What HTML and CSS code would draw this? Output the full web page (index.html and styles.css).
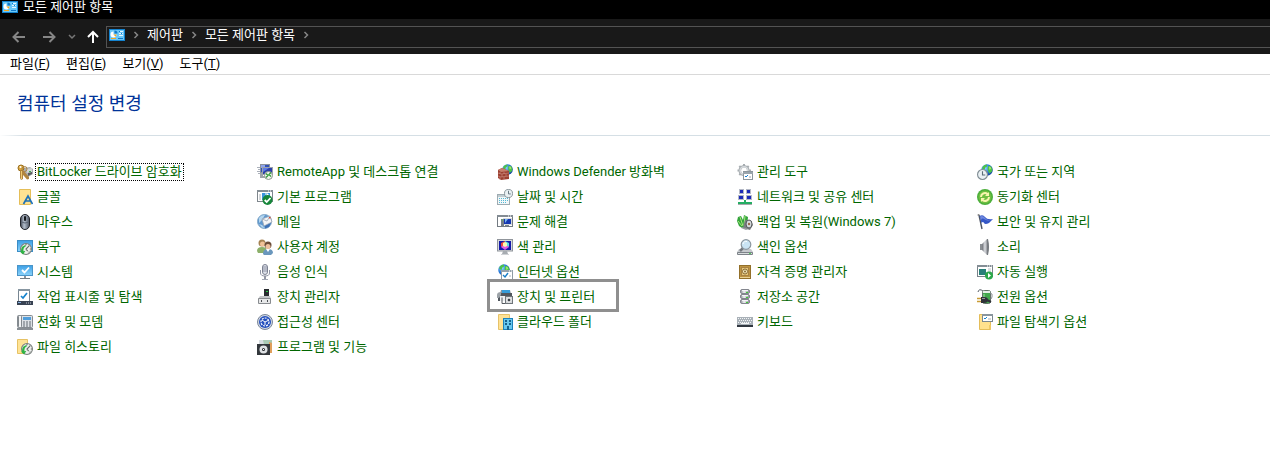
FILE: index.html
```html
<!DOCTYPE html>
<html lang="ko">
<head>
<meta charset="utf-8">
<meta name="viewport" content="width=device-width, initial-scale=1">
<title>모든 제어판 항목</title>
<link rel="stylesheet" href="styles.css">
</head>
<body>
<svg class="defs" aria-hidden="true">
<defs>
<linearGradient id="gBlue" x1="0" y1="0" x2="0" y2="1"><stop offset="0" stop-color="#3b9fe6"/><stop offset="1" stop-color="#8ed4fa"/></linearGradient>
<radialGradient id="gGlobe" cx=".35" cy=".35" r=".7"><stop offset="0" stop-color="#8ad4ff"/><stop offset=".6" stop-color="#2376d8"/><stop offset="1" stop-color="#123f9a"/></radialGradient>
<linearGradient id="gGray" x1="0" y1="0" x2="1" y2="0"><stop offset="0" stop-color="#6d7077"/><stop offset=".45" stop-color="#dcdee2"/><stop offset="1" stop-color="#62656c"/></linearGradient>
<linearGradient id="gDisk" x1="0" y1="0" x2="1" y2="0"><stop offset="0" stop-color="#8a8d95"/><stop offset=".4" stop-color="#f0f1f4"/><stop offset="1" stop-color="#8d9098"/></linearGradient>
<linearGradient id="gMouse" x1="0" y1="0" x2="1" y2="0"><stop offset="0" stop-color="#3a404b"/><stop offset=".4" stop-color="#b6c1cf"/><stop offset="1" stop-color="#4a525f"/></linearGradient>
<symbol id="panel" viewBox="0 0 16 12"><rect width="16" height="12" fill="#1382cf"/><rect x="1" y="1" width="14" height="10" fill="#69c7f7"/><path d="M4.500 2.500v3h3a3 3 0 1 1-3-3z" fill="#fff"/><path d="M5.500 1.500a3 3 0 0 1 3 3h-3z" fill="#1178c8"/><path d="M4.500 5.500h3a3 3 0 0 1-1 2.200z" fill="#f4a51c"/><path d="M10 2h4v1h-4zM10 4h4v1h-4zM10 6h4v1h-4z" fill="#e6f6fe"/><path d="M10 2h1v1h-1zM12 4h1v1h-1z" fill="#1178c8"/><path d="M2 9h5v1H2z" fill="#f4a51c"/><path d="M9 9h5v1H9z" fill="#1178c8"/></symbol>
<symbol id="next" viewBox="0 0 8 8"><path d="M2.500 1l3 3-3 3" fill="none" stroke="#858585" stroke-width="1.500"/></symbol>
<symbol id="globe" viewBox="0 0 10 10"><circle cx="5" cy="5" r="4.800" fill="url(#gGlobe)"/><path d="M1.500 2Q3 .5 5 .5L5 2 3.500 3 3 5 1 4zM6 1.500l2.500.5 1 2.500-.5 2-2 1.500L6 6l-.5-2zM3 6l2 1-.5 2.500L3 9z" fill="#4cc348"/><path d="M6.500 2l1.500.5.5 1.500-1.500 1z" fill="#a2e86b"/></symbol>
<symbol id="clock" viewBox="0 0 10 10"><circle cx="5" cy="5" r="4.500" fill="#e9f0f3" stroke="#7f8c93"/><path d="M5 2v3.500h2.500" fill="none" stroke="#5b6d77"/></symbol>
<symbol id="rewind" viewBox="0 0 11 11"><circle cx="5.500" cy="5.500" r="5" fill="#eef0ee" stroke="#777d7b"/><path d="M8.500 2.500L5.500 5.500 7 7.500M5.500 1v1M10 5.500H9M8.500 8.500L8 8" stroke="#626967" fill="none"/><path d="M1 7.500C.8 4 2.500 2 5.500 2L5 3.500C3.500 4 3 5.500 3.200 7.500L5 7 2.800 10.500 0 8z" fill="#2fb344"/></symbol>
</defs>
</svg>

<header class="titlebar">
<svg class="panel-icon" aria-hidden="true"><use href="#panel"/></svg>
<span>모든 제어판 항목</span>
</header>

<nav class="navbar" aria-label="탐색">
<div class="nav-buttons">
<button type="button" class="nav-btn" aria-label="뒤로"><svg width="14" height="12" viewBox="0 0 14 12"><path d="M13 6H1.500M6.500 1l-5 5 5 5" fill="none" stroke="#868686" stroke-width="2"/></svg></button>
<button type="button" class="nav-btn" aria-label="앞으로"><svg width="14" height="12" viewBox="0 0 14 12"><path d="M1 6h11.500M7.500 1l5 5-5 5" fill="none" stroke="#868686" stroke-width="2"/></svg></button>
<button type="button" class="nav-btn nav-btn-small" aria-label="최근 위치"><svg width="8" height="6" viewBox="0 0 8 6"><path d="M1 1l3 3 3-3" fill="none" stroke="#777" stroke-width="1.500"/></svg></button>
<button type="button" class="nav-btn nav-btn-up" aria-label="위로"><svg width="14" height="14" viewBox="0 0 14 14"><path d="M7 13V2M2 7l5-5 5 5" fill="none" stroke="#fff" stroke-width="2"/></svg></button>
</div>
<div class="address">
<svg class="panel-icon" aria-hidden="true"><use href="#panel"/></svg>
<svg class="sep" aria-hidden="true"><use href="#next"/></svg>
<a href="#">제어판</a>
<svg class="sep" aria-hidden="true"><use href="#next"/></svg>
<a href="#">모든 제어판 항목</a>
<svg class="sep" aria-hidden="true"><use href="#next"/></svg>
</div>
</nav>

<div class="menubar">
<button type="button">파일(<u>F</u>)</button>
<button type="button">편집(<u>E</u>)</button>
<button type="button">보기(<u>V</u>)</button>
<button type="button">도구(<u>T</u>)</button>
</div>

<main>
<h1 class="heading">컴퓨터 설정 변경</h1>
<ul class="items">
<li><svg class="icon" viewBox="0 0 16 16"><path d="M7 4l6-1 3 2v5l-5 3-5-2z" fill="#a9adb0"/><path d="M9 5l6-1v4l-5 1z" fill="#d3d6d7"/><path d="M11 9l4-1v2l-4 2z" fill="#5a5d60"/><path d="M12 7h2v1h-2z" fill="#36b34c"/><circle cx="4" cy="4" r="3" fill="#d8a53c" stroke="#9b701f"/><circle cx="3.500" cy="3" r="1" fill="#fff"/><path d="M3 7h3v8l-2 1-1-2zM6 6l6 7v2l-2 .5-6-7z" fill="#b08540"/><path d="M4 7h1v8H4z" fill="#f1cc70"/><circle cx="7.500" cy="5" r="2.500" fill="none" stroke="#a98040"/></svg><a class="focused" href="#">BitLocker 드라이브 암호화</a></li>
<li><svg class="icon" viewBox="0 0 16 16"><path d="M0 3.500h3M1 5.500h2M0 7.500h3M1 9.500h2" stroke="#aab0ba"/><rect x="3.500" y=".5" width="9" height="8" fill="#3150b5" stroke="#8a929c"/><path d="M4 1h4v3H4z" fill="#8ea4ea"/><rect x="5.500" y="3.500" width="10" height="7" fill="#2a3fa8" stroke="#9aa2ab"/><path d="M6 4h6l-6 4z" fill="#5f7ce6"/><path d="M3 9h3v3h4v2H3z" fill="#9ba2a8"/><circle cx="11.500" cy="11.500" r="4" fill="#f1f5ef" stroke="#8c958c"/><path d="M9 9.500l2 2-2 2M14 8.500l-2 2 2 2" fill="none" stroke="#329b39" stroke-width="1.300"/></svg><a href="#">RemoteApp 및 데스크톱 연결</a></li>
<li><svg class="icon" viewBox="0 0 16 16"><svg x="5" y="0" width="11" height="11"><use href="#globe"/></svg><path d="M1 6l4-2 7 3v8l-8 1-3-2z" fill="#9c3f30"/><path d="M1 6l4-2 7 3-8 1z" fill="#c57e6b"/><path d="M1 9l3 1 8-1M1 12l3 1 8-1M3 8v2M7 8v2M5 10v3M9 10v2M3 13v3M7 13v2" fill="none" stroke="#d0968a" stroke-width=".6"/></svg><a href="#">Windows Defender 방화벽</a></li>
<li><svg class="icon" viewBox="0 0 16 16"><circle cx="7" cy="6.500" r="4.200" fill="none" stroke="#a7adb1" stroke-width="2.600"/><path d="M7 0v3M7 10v3M.5 6.500h3M11 6.500h3M2.300 2l2 2M11.700 2l-2 2M2.300 11l2-2" stroke="#a7adb1" stroke-width="2"/><circle cx="7" cy="6.500" r="3.800" fill="none" stroke="#d6dadd" stroke-width="1.600"/><rect x="6.500" y="7.500" width="9" height="8" fill="#fff" stroke="#8d979e"/><path d="M6 8h10v2H6z" fill="#9aa5ad"/><path d="M8 12l1 1 2-2" fill="none" stroke="#167fd2"/><path d="M12 13h2" stroke="#9aa5ad"/></svg><a href="#">관리 도구</a></li>
<li><svg class="icon" viewBox="0 0 16 16"><svg x="4" y="0" width="12" height="12"><use href="#globe"/></svg><svg x="0" y="5" width="11" height="11"><use href="#clock"/></svg></svg><a href="#">국가 또는 지역</a></li>

<li><svg class="icon" viewBox="0 0 16 16"><path d="M2.500.5h11v15h-11z" fill="#ffe292" stroke="#e5be58"/><path d="M6.500 15L11 7l4.500 8M8.500 12h5" fill="none" stroke="#1e72b8" stroke-width="1.700"/></svg><a href="#">글꼴</a></li>
<li><svg class="icon" viewBox="0 0 16 16"><rect x=".5" y="1.500" width="15" height="11" fill="#fff" stroke="#7f878d"/><path d="M0 1h16v2H0z" fill="#858e95"/><path d="M11 2h1M13 2h1" stroke="#fff"/><rect x="2" y="5" width="2" height="6" fill="#d4d7da"/><rect x="5" y="4" width="8" height="7" fill="#3b96dc"/><path d="M7 9l4-4M8 5h3v3" fill="none" stroke="#fff"/><circle cx="10.500" cy="11" r="5" fill="#16863a"/><path d="M7.700 11l2 2 3.800-4" fill="none" stroke="#fff" stroke-width="1.800"/></svg><a href="#">기본 프로그램</a></li>
<li><svg class="icon" viewBox="0 0 16 16"><rect x=".5" y="5.500" width="12" height="10" fill="#f2f7f9" stroke="#9eabb1"/><path d="M1 6h11v2H1z" fill="#c1cdd2"/><path d="M2 9.500h9M2 11.500h9M2 13.500h7" stroke="#56bad5" stroke-dasharray="1 1"/><svg x="7" y="0" width="9" height="9"><use href="#clock"/></svg></svg><a href="#">날짜 및 시간</a></li>
<li><svg class="icon" viewBox="0 0 16 16"><path d="M2 0h5v5H2zM9 0h5v5H9zM1 6h6v5H1zM9 6h6v5H9z" fill="#b4b9c6"/><path d="M3 1h3v3H3zM10 1h3v3h-3zM2 7h4v3H2zM10 7h4v3h-4z" fill="#1b2ab8"/><path d="M7 11h2v2h6v2H1v-2h6z" fill="#25ad63"/><path d="M1 15h14v1H1z" fill="#a6aaad"/></svg><a href="#">네트워크 및 공유 센터</a></li>
<li><svg class="icon" viewBox="0 0 16 16"><circle cx="8" cy="8" r="8" fill="#4caf3b"/><circle cx="8" cy="8" r="6.500" fill="#70bf42"/><path d="M3 8a5 5 0 0 1 8-4l1-1v4H8l1.500-1.500A3 3 0 0 0 5 8z" fill="#f8f6b0"/><path d="M13 8a5 5 0 0 1-8 4l-1 1V9h4l-1.500 1.500A3 3 0 0 0 11 8z" fill="#f8f6b0"/></svg><a href="#">동기화 센터</a></li>

<li><svg class="icon" viewBox="0 0 16 16"><rect x="3.500" y=".5" width="9" height="15" rx="4.500" fill="url(#gMouse)" stroke="#23262c"/><path d="M4 8q4 2 8 0" fill="none" stroke="#5b6574"/><rect x="7" y="2" width="2" height="5" rx="1" fill="#15181c"/></svg><a href="#">마우스</a></li>
<li><svg class="icon" viewBox="0 0 16 16"><circle cx="7.500" cy="7.500" r="7" fill="#5f97cf" stroke="#86abc9"/><path d="M2 4Q4 1 8 1L5 6l-3 3zM2 10l3 1 3 3-3-.5z" fill="#b4d6ef"/><path d="M5 5l8-3 2 6-8 4z" fill="#f4f5f7" stroke="#98a3b3" stroke-width=".8"/><path d="M5 5l5 2 3-5" fill="none" stroke="#9aa7b5" stroke-width=".8"/><path d="M12 3h1.500v1.500H12z" fill="#d34e35"/><path d="M8 12l6-3-2 4-4 1.500z" fill="#3e71b5"/></svg><a href="#">메일</a></li>
<li><svg class="icon" viewBox="0 0 16 16"><rect x=".5" y="1.500" width="15" height="11" fill="#fff" stroke="#737b82"/><path d="M0 1h16v2H0z" fill="#848c93"/><path d="M11 2h1M13 2h1" stroke="#fff"/><rect x="6" y="4" width="9" height="7" fill="#d6d9dd"/><rect x="7" y="5" width="7" height="5" fill="#1638b2"/><path d="M8 5h3L8 9z" fill="#7eb9ee"/><rect x="4" y="5" width="3" height="7" fill="#777f87"/><path d="M5 6h1" stroke="#4de052"/><path d="M8 11h4v1H8z" fill="#7d858b"/></svg><a href="#">문제 해결</a></li>
<li><svg class="icon" viewBox="0 0 16 16"><path d="M1 3l3-1 2 4 1-5 4 2-1 11H5L2 12 0 7z" fill="#35a43c"/><path d="M3 3l3 9M8 2l-1 9M1 7l4 5" stroke="#a6e87d" fill="none"/><path d="M8 6l6 1 2 4-3 5-7-2z" fill="#7b7e82"/><ellipse cx="12" cy="10" rx="3" ry="4" fill="#d8dcdf" stroke="#55585c"/><circle cx="12" cy="10" r="1.200" fill="#9a6a47"/><path d="M5 13l6 2-2 1-5-2z" fill="#999da0"/></svg><a href="#">백업 및 복원(Windows 7)</a></li>
<li><svg class="icon" viewBox="0 0 16 16"><path d="M2 1l3 14" stroke="#4c5463" stroke-width="1.400"/><circle cx="1.500" cy="1" r="1" fill="#888"/><path d="M2.500 2Q6 0 8 3t8 2l-4 4q-4 2-5 0T4.500 9z" fill="#3557c6"/><path d="M3 2.500Q6 1 8 4t6 1.500q-3 2-6 0T4 6z" fill="#6f88df"/></svg><a href="#">보안 및 유지 관리</a></li>

<li><svg class="icon" viewBox="0 0 16 16"><rect x=".5" y="1.500" width="15" height="11" fill="url(#gBlue)" stroke="#3b8dc6"/><svg x="3" y="4" width="12" height="12"><use href="#rewind"/></svg></svg><a href="#">복구</a></li>
<li><svg class="icon" viewBox="0 0 16 16"><circle cx="5" cy="4" r="3.500" fill="#a58252"/><circle cx="5.500" cy="5" r="2.500" fill="#f0c298"/><path d="M0 12q0-4 5-4t5 4l-2 2H1z" fill="#8cb06a"/><circle cx="11" cy="6" r="3.500" fill="#6b4c38"/><circle cx="11" cy="7.500" r="2.500" fill="#eec09d"/><path d="M6 15q0-5 5-5t5 4l-2 2H7z" fill="#6a97bd"/><path d="M9 10l2 3 2-3z" fill="#fff"/></svg><a href="#">사용자 계정</a></li>
<li><svg class="icon" viewBox="0 0 16 16"><rect x=".5" y=".5" width="15" height="11.500" fill="#d7dade" stroke="#90959b"/><rect x="2" y="2" width="12" height="9" fill="#1519a8"/><path d="M4 4l4-2v4L4 8z" fill="#f04a3a"/><path d="M8 2l4 2v4L8 6z" fill="#58dfe0"/><path d="M4 8l4-3 4 3-4 3z" fill="#e25be4"/><path d="M6 4l2-1 2 1v3L8 8 6 7z" fill="#fbf8b4"/><path d="M6 12h4l1 3H5z" fill="#a7acb1"/><path d="M4 15h8v1H4z" fill="#d0d3d6"/></svg><a href="#">색 관리</a></li>
<li><svg class="icon" viewBox="0 0 16 16"><path d="M2 10h12l2 3v2H0v-2z" fill="#c5c9cd"/><rect y="13" width="16" height="3" rx="1" fill="#7d8389"/><path d="M1 14h14v1H1z" fill="#d9dcde"/><path d="M12 14.500h2" stroke="#51d05c"/><path d="M3 12l3-3" stroke="#74797f" stroke-width="2.500"/><circle cx="9" cy="5.500" r="4.800" fill="#cae4f4" stroke="#8c969e" stroke-width="1.200"/><path d="M6 5a3 3 0 0 1 4-2.500" fill="none" stroke="#fff"/></svg><a href="#">색인 옵션</a></li>
<li><svg class="icon" viewBox="0 0 16 16"><path d="M3 5h3v6H3z" fill="#5d6268"/><path d="M5 5l5-5q3 8 0 16l-5-5z" fill="url(#gGray)"/><path d="M10 0h1q2 8 0 16h-1z" fill="#777b80"/><path d="M4 5v6" stroke="#b8bbbe"/></svg><a href="#">소리</a></li>

<li><svg class="icon" viewBox="0 0 16 16"><rect x=".5" y="1.500" width="15" height="10" fill="url(#gBlue)" stroke="#4b95c8"/><path d="M5 6l2.500 2.500L12 3.500" fill="none" stroke="#fff" stroke-width="1.800"/><path d="M7 12h2v2H7z" fill="#8b949b"/><path d="M3 14h10v1H3z" fill="#737d84"/></svg><a href="#">시스템</a></li>
<li><svg class="icon" viewBox="0 0 16 16"><rect x="5.500" y=".5" width="5" height="10" rx="2.500" fill="#dfe2eb" stroke="#7d8292"/><path d="M6 3h4M6 5h4M6 7h4" stroke="#8b90a2"/><path d="M3.500 6v3q0 3 4.500 3t4.500-3V6" fill="none" stroke="#9095a5"/><path d="M7 12h2v3H7z" fill="#9296a4"/><path d="M5 15h6v1H5z" fill="#a3a8b4"/></svg><a href="#">음성 인식</a></li>
<li><svg class="icon" viewBox="0 0 16 16"><svg x="1" y="0" width="12" height="12"><use href="#globe"/></svg><rect x="4.500" y="6.500" width="11" height="9" fill="#fff" stroke="#8e9ba4"/><path d="M4 6h12v2H4z" fill="#94a2ac"/><path d="M12 7h1M14 7h1" stroke="#fff"/><path d="M6 11l2 2 3-4" fill="none" stroke="#1a7fc8" stroke-width="1.400"/><path d="M12 12h2" stroke="#aab3ba"/></svg><a href="#">인터넷 옵션</a></li>
<li><svg class="icon" viewBox="0 0 16 16"><rect x="2.500" y="1.500" width="11" height="13" fill="#bd9442" stroke="#93702a"/><rect x="4.500" y="3.500" width="7" height="8" fill="#e6c77b" stroke="#a88243"/><circle cx="8" cy="7.500" r="2.500" fill="#f4e7bd" stroke="#876a32"/><circle cx="8" cy="7.500" r="1" fill="#876a32"/><path d="M3 13.500h10" stroke="#ead295"/></svg><a href="#">자격 증명 관리자</a></li>
<li><svg class="icon" viewBox="0 0 16 16"><rect x=".5" y="1.500" width="15" height="11" fill="#fff" stroke="#79838a"/><path d="M0 1h16v2H0z" fill="#848e95"/><path d="M10 2h1M12 2h1M14 2h1" stroke="#fff"/><rect x="2" y="5" width="7" height="6" fill="#287f78"/><path d="M11 5h3M11 7h3" stroke="#bac1c5"/><circle cx="12" cy="11.500" r="4" fill="#2ba84a"/><path d="M11 9l3 2.500-3 2.500z" fill="#fff"/></svg><a href="#">자동 실행</a></li>

<li><svg class="icon" viewBox="0 0 16 16"><rect x="1.500" y=".5" width="11" height="12" fill="#fff" stroke="#788692"/><path d="M1 0h12v2H1z" fill="#8796a1"/><path d="M4 7l2 2 4-5" fill="none" stroke="#1683cd" stroke-width="1.700"/><path d="M0 12h16v4H0z" fill="#384252"/><path d="M1 13h3v1H1z" fill="#82aee0"/><path d="M9 14h1M11 14h1M13 14h1" stroke="#c0c7d1"/></svg><a href="#">작업 표시줄 및 탐색</a></li>
<li><svg class="icon" viewBox="0 0 16 16"><rect x="7" y="0" width="5" height="8" fill="#292c30"/><path d="M9 2h2v1H9z" fill="#2aca43"/><path d="M3 7h10l1 3H1z" fill="#c3c5c8"/><path d="M1.500 9.500h12v5h-12z" fill="#e7e8e9" stroke="#898c90"/><path d="M4 11h1v2H4zM10 11h1v2h-1z" fill="#4a4d51"/></svg><a href="#">장치 관리자</a></li>
<li class="marked"><svg class="icon" viewBox="0 0 16 16"><path d="M4 1h9l1 4H3z" fill="#86939d"/><path d="M5 1h8v3H5z" fill="#359cd9"/><path d="M1 4h14v6H4v2H1z" fill="#50565d"/><path d="M0 6q0-3 4-3v3l-2 3H0z" fill="#9da3a8"/><path d="M3 7h9v5H3z" fill="#eceff1"/><path d="M5 8.500v6h3" fill="none" stroke="#55595e"/><rect x="8.500" y="7.500" width="7" height="7" fill="#d4d7d9" stroke="#6f757a"/><circle cx="12" cy="11" r="2" fill="#3c4147" stroke="#fff"/></svg><a href="#">장치 및 프린터</a></li>
<li><svg class="icon" viewBox="0 0 16 16"><g id="disk"><rect x="3.500" y=".5" width="9" height="4" rx="1.500" fill="url(#gDisk)" stroke="#83868e"/><path d="M5 1.500h6" stroke="#f4f5f7"/><path d="M9 3.500h2" stroke="#3ece34"/></g><use href="#disk" y="5"/><use href="#disk" y="10"/></svg><a href="#">저장소 공간</a></li>
<li><svg class="icon" viewBox="0 0 16 16"><path d="M1 3q1-4 5-1" fill="none" stroke="#555d66"/><rect x="5.500" y="1.500" width="8" height="13" rx="2" fill="#43a84d" stroke="#647268"/><path d="M6 2h7v2H6z" fill="#e6eee7"/><path d="M7 5v8" stroke="#9be09f"/><path d="M13 4q3 0 2 4l-1 2" fill="none" stroke="#8a8f92"/><path d="M0 9.500h5M0 12.500h5" stroke="#c99c34" stroke-width="1.500"/><path d="M4 8h3q4 0 4 3t-4 3H4z" fill="#303339"/><path d="M5 9.500h3" stroke="#92969c"/><path d="M10 11l4 2" stroke="#303339" stroke-width="2"/></svg><a href="#">전원 옵션</a></li>

<li><svg class="icon" viewBox="0 0 16 16"><rect x=".5" y="1.500" width="15" height="12" rx="1" fill="#dde1e5" stroke="#858b91"/><rect x="1.500" y="1.500" width="3" height="12" rx="1" fill="#f3f4f5" stroke="#83898e"/><rect x="6" y="3" width="8" height="3" fill="#509edb"/><path d="M6 8h8M6 10h8M6 12h8" stroke="#626a72" stroke-dasharray="2 1"/><path d="M0 14h16v2H0z" fill="#898f95"/></svg><a href="#">전화 및 모뎀</a></li>
<li><svg class="icon" viewBox="0 0 16 16"><circle cx="8" cy="8" r="7.500" fill="#d2d9e4" stroke="#7b8799"/><circle cx="8" cy="8" r="6" fill="#2450bd"/><circle cx="8" cy="8" r="4" fill="none" stroke="#fff" stroke-width="1.200" stroke-dasharray="2 1"/><path d="M8 8L5 6M8 8l4-2M8 8v3" stroke="#fff" fill="none"/></svg><a href="#">접근성 센터</a></li>
<li><svg class="icon" viewBox="0 0 16 16"><path d="M1.500.5h11v15h-11z" fill="#ffe294" stroke="#e6c269"/><rect x="6.500" y="4.500" width="9" height="11" fill="#68c8ee" stroke="#1d82bb"/><path d="M8 6h2v2H8zM12 6h2v2h-2zM8 9h2v2H8zM12 9h2v2h-2zM10 12h2v4h-2z" fill="#14618f"/></svg><a href="#">클라우드 폴더</a></li>
<li><svg class="icon" viewBox="0 0 16 16"><rect y="3" width="16" height="9" fill="#a9b1b8"/><path d="M1 4.500h14M2 6.500h13M1 8.500h14" stroke="#f3f5f6" stroke-dasharray="1 1"/><path d="M4 9.500h8" stroke="#f3f5f6"/><path d="M0 11h16v2H0z" fill="#303740"/></svg><a href="#">키보드</a></li>
<li><svg class="icon" viewBox="0 0 16 16"><path d="M2.500.5h11v15h-11z" fill="#ffe18d" stroke="#e4bd59"/><rect x="5.500" y=".5" width="10" height="7" fill="#fff" stroke="#798790"/><path d="M5 0h11v2H5z" fill="#89959d"/><path d="M7 4l1 1 2-2" fill="none" stroke="#1684d0"/><path d="M11 5h3" stroke="#a7afb5"/><path d="M12 11h2v4h-2z" fill="#f0c963"/></svg><a href="#">파일 탐색기 옵션</a></li>

<li><svg class="icon" viewBox="0 0 16 16"><path d="M.5.5h10v14H.5z" fill="#ffe395" stroke="#e6c265"/><svg x="4" y="4" width="12" height="12"><use href="#rewind"/></svg></svg><a href="#">파일 히스토리</a></li>
<li><svg class="icon" viewBox="0 0 16 16"><path d="M2 1h12v5H2z" fill="#d7dde1"/><path d="M6 1h9v10H8z" fill="#a9c9b5"/><path d="M12 3l3 1v10h-3z" fill="#e0a05c"/><rect x="0" y="5" width="13" height="11" fill="#33373c"/><circle cx="6.500" cy="10.500" r="4" fill="#dee1e4"/><circle cx="6.500" cy="10.500" r="1.500" fill="#25292e"/><path d="M6 10h1v1H6z" fill="#fff"/></svg><a href="#">프로그램 및 기능</a></li>
</ul>
</main>
</body>
</html>
```
FILE: styles.css
```css
*,
*::after {
  box-sizing: border-box;
}

body {
  margin: 0;
  background: #fff;
  color: #000;
  font: 13px/18px Roboto, "Noto Sans CJK KR", sans-serif;
}

.defs {
  position: absolute;
  width: 0;
  height: 0;
}

a {
  color: inherit;
  text-decoration: none;
}

button {
  margin: 0;
  padding: 0;
  border: 0;
  background: none;
  color: inherit;
  font: inherit;
}

.titlebar {
  display: flex;
  align-items: center;
  gap: 5px;
  height: 19px;
  padding: 0 2px 5px;
  background: #000;
  color: #fff;
}

.panel-icon {
  flex: none;
  width: 16px;
  height: 12px;
}

.navbar {
  display: flex;
  align-items: center;
  height: 35px;
  padding-left: 12px;
  background: #191919;
  color: #fff;
}

.nav-buttons {
  display: flex;
  align-items: center;
  width: 94px;
}

.nav-btn {
  display: flex;
  width: 30px;
}

.nav-btn-small {
  width: 14px;
  margin-left: -4px;
}

.nav-btn-up {
  width: 14px;
  margin-left: 4px;
}

.address {
  display: flex;
  flex: 1;
  align-items: center;
  gap: 7px;
  height: 22px;
  padding: 0 2px 4px;
  border: 1px solid #535353;
  border-right: 0;
}

.sep {
  width: 8px;
  height: 8px;
}

.menubar {
  display: flex;
  gap: 16px;
  height: 21px;
  padding: 0 10px;
  border-bottom: 1px solid #d9d9d9;
}

.heading {
  margin: 0;
  padding: 17px 17px 19px;
  border-bottom: 1px solid;
  border-image: linear-gradient(to right, #fff, #d5dfe5 24px) 1;
  color: #003399;
  font-size: 18px;
  font-weight: 400;
  line-height: 24px;
}

.items {
  display: grid;
  grid-template-columns: repeat(auto-fill, 240px);
  grid-auto-rows: 25px;
  margin: 0;
  padding: 23px 0 24px 17px;
  color: #006600;
  list-style: none;
}

.items li {
  position: relative;
  display: flex;
  align-items: center;
  gap: 3px;
}

.items a {
  padding: 0 1px;
  line-height: 16px;
  white-space: nowrap;
}

.icon {
  flex: none;
  width: 16px;
  height: 16px;
}

.items .focused {
  outline: 1px dotted #000;
}

.marked::after {
  content: "";
  position: absolute;
  top: -5px;
  left: -10px;
  width: 132px;
  height: 33px;
  border: 3px solid #8f8f8f;
  pointer-events: none;
}
```
